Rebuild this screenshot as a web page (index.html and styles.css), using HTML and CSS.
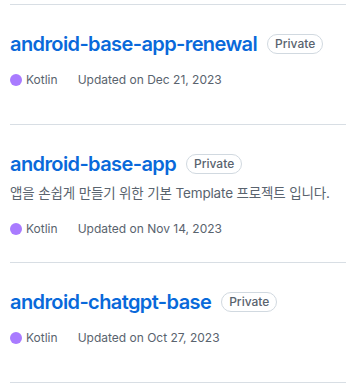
FILE: index.html
```html
<!DOCTYPE html>
<html lang="ko">
<head>
  <meta charset="UTF-8">
  <meta name="viewport" content="width=device-width, initial-scale=1.0">
  <title>Repositories</title>
  <link rel="stylesheet" href="styles.css">
</head>
<body>
  <ul class="repo-list">
    <li class="repo">
      <div class="repo-info">
        <h3 class="repo-title">
          <a href="#" class="repo-name">android-base-app-renewal</a>
          <span class="label">Private</span>
        </h3>
        <div class="repo-meta">
          <span class="lang"><span class="lang-dot"></span>Kotlin</span>
          <span>Updated on Dec 21, 2023</span>
        </div>
      </div>
    </li>
    <li class="repo">
      <div class="repo-info">
        <h3 class="repo-title">
          <a href="#" class="repo-name">android-base-app</a>
          <span class="label">Private</span>
        </h3>
        <p class="repo-desc">앱을 손쉽게 만들기 위한 기본 Template 프로젝트 입니다.</p>
        <div class="repo-meta">
          <span class="lang"><span class="lang-dot"></span>Kotlin</span>
          <span>Updated on Nov 14, 2023</span>
        </div>
      </div>
    </li>
    <li class="repo">
      <div class="repo-info">
        <h3 class="repo-title">
          <a href="#" class="repo-name">android-chatgpt-base</a>
          <span class="label">Private</span>
        </h3>
        <div class="repo-meta">
          <span class="lang"><span class="lang-dot"></span>Kotlin</span>
          <span>Updated on Oct 27, 2023</span>
        </div>
      </div>
    </li>
  </ul>
</body>
</html>
```
FILE: styles.css
```css
body {
  margin: 0;
  padding-top: 4px;
  background-color: #ffffff;
  font-family: Inter, "Noto Sans CJK KR", sans-serif;
  color: #1f2328;
}
.repo-list {
  list-style: none;
  margin: 0 0 0 10px;
  padding: 0;
  border-top: 1px solid #d8dee4;
}
.repo {
  padding: 24px 0;
  border-bottom: 1px solid #d8dee4;
}
.repo-info {
  min-height: 71px;
}
.repo-title {
  display: flex;
  align-items: center;
  margin: 0 0 4px 0;
  height: 30px;
  font-size: 20px;
}
.repo-name {
  color: #0969da;
  font-weight: 600;
  text-decoration: none;
  letter-spacing: -0.6px;
}
.label {
  margin-left: 10px;
  padding: 0 7px;
  height: 20px;
  line-height: 18px;
  box-sizing: border-box;
  border: 1px solid #d1d9e0;
  border-radius: 10px;
  font-size: 12px;
  font-weight: 500;
  color: #59636e;
}
.repo-desc {
  margin: 0 0 16px 0;
  font-size: 13.5px;
  line-height: 21px;
  letter-spacing: -0.15px;
  white-space: nowrap;
  color: #59636e;
}
.repo-meta {
  margin-top: 12px;
  display: flex;
  align-items: center;
  font-size: 12px;
  line-height: 18px;
  color: #59636e;
}
.lang {
  display: flex;
  align-items: center;
  margin-right: 20px;
}
.lang-dot {
  width: 12px;
  height: 12px;
  border-radius: 50%;
  background-color: #a97bff;
  margin-right: 4px;
}
```
